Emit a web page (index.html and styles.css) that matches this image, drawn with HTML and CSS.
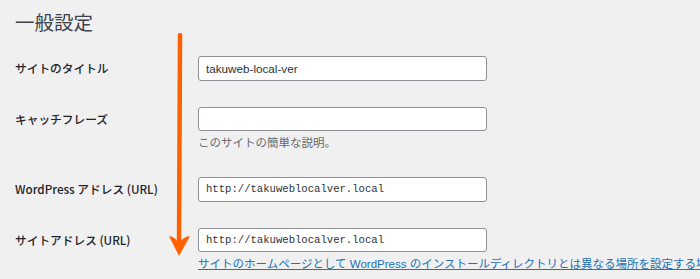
FILE: index.html
```html
<!DOCTYPE html>
<html>
<head>
  <title>一般設定</title>
  <link rel="stylesheet" href="styles.css">
</head>
<body>
  <h1>一般設定</h1>
  <div class="form-table">
    <div class="row">
      <label for="blogname">サイトのタイトル</label>
      <div class="field">
        <input type="text" id="blogname" value="takuweb-local-ver">
      </div>
    </div>
    <div class="row">
      <label for="blogdescription">キャッチフレーズ</label>
      <div class="field">
        <input type="text" id="blogdescription" value="">
        <p class="description">このサイトの簡単な説明。</p>
      </div>
    </div>
    <div class="row">
      <label for="siteurl">WordPress アドレス (URL)</label>
      <div class="field">
        <input type="text" id="siteurl" class="code" value="http://takuweblocalver.local">
      </div>
    </div>
    <div class="row">
      <label for="home">サイトアドレス (URL)</label>
      <div class="field">
        <input type="text" id="home" class="code" value="http://takuweblocalver.local">
        <p class="description"><a href="#">サイトのホームページとして WordPress のインストールディレクトリとは異なる場所を設定する場合は、ここにアドレスを入力してください。</a></p>
      </div>
    </div>
  </div>

  <!-- annotation arrow -->
  <svg class="arrow" width="40" height="240" viewBox="0 0 40 240">
    <path d="M20 2 L19 212" stroke="#ff6100" stroke-width="4.5" stroke-linecap="round" fill="none"/>
    <path d="M9 203 Q15 204 19 210 Q23 204 30 203 L19 223 Z" fill="#ff6100"/>
  </svg>
</body>
</html>
```

FILE: styles.css
```css
body {
  font-family: "Liberation Sans", "Noto Sans CJK JP", sans-serif;
  background: #f0f0f1;
  color: #1d2327;
  margin: 0;
  padding: 0 15px;
  overflow: hidden;
  position: relative;
  height: 279px;
}
h1 {
  font-family: "Noto Sans CJK JP", sans-serif;
  font-size: 19.5px;
  font-weight: 400;
  line-height: 26px;
  margin: 9px 0 8px;
  color: #3c434a;
}
.row {
  display: flex;
  align-items: flex-start;
  padding: 13px 0 13px;
}
.row label {
  width: 183px;
  flex-shrink: 0;
  font-family: "Noto Sans CJK JP", sans-serif;
  font-size: 11.7px;
  font-weight: 500;
  line-height: 24px;
  color: #1d2327;
}
.field {
  min-width: 0;
}
.field input {
  box-sizing: border-box;
  width: 289px;
  height: 24.5px;
  padding: 0 7px;
  border: 1px solid #8c8f94;
  border-radius: 3px;
  background: #fff;
  font-family: "Liberation Sans", "Noto Sans CJK JP", sans-serif;
  font-size: 11.7px;
  color: #2c3338;
  display: block;
}
.field input.code {
  font-family: "Liberation Mono", monospace;
  font-size: 10.6px;
}
.description {
  margin: 4px 0 0;
  font-size: 11.5px;
  line-height: 16px;
  color: #646970;
  white-space: nowrap;
}
.description a {
  color: #2271b1;
  text-decoration: underline;
}
.arrow {
  position: absolute;
  left: 160px;
  top: 33px;
}
```
